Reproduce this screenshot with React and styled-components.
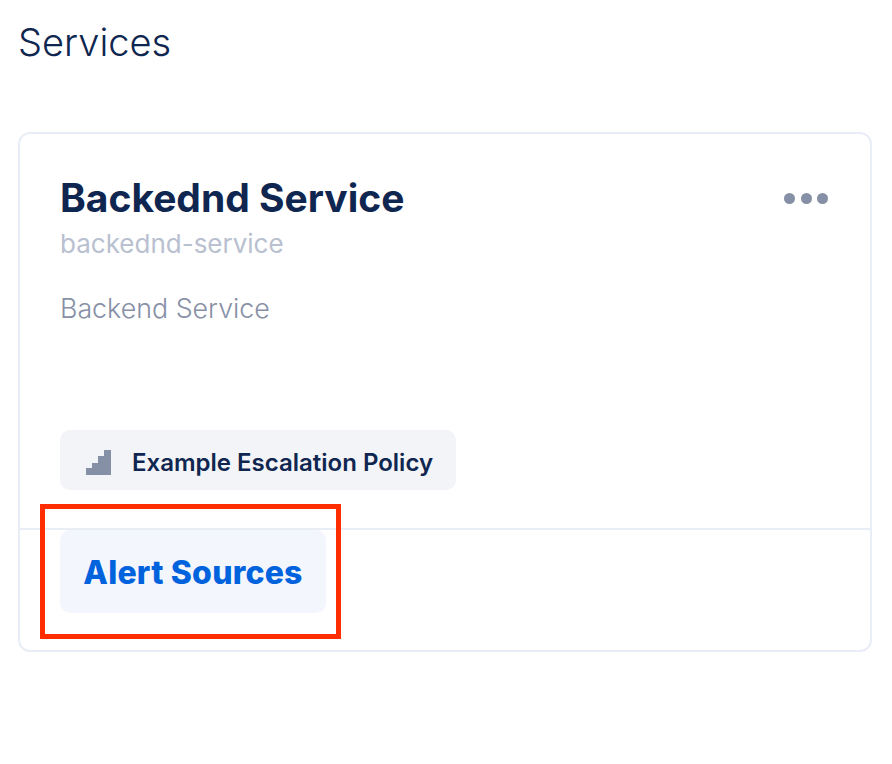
import React from 'react';
import styled, { createGlobalStyle } from 'styled-components';

const GlobalStyle = createGlobalStyle`
  html, body {
    margin: 0;
    padding: 0;
    background: #fff;
    font-family: Inter, "Liberation Sans", sans-serif;
  }
`;

const Page = styled.div`
  width: 892px;
  height: 764px;
  padding: 20px 20px 0 18px;
  box-sizing: border-box;
  overflow: hidden;
`;

const Heading = styled.h1`
  margin: 0 0 67px;
  font-size: 38px;
  line-height: 45px;
  font-weight: 300;
  color: #0f2650;
`;

const Card = styled.div`
  position: relative;
  box-sizing: border-box;
  height: 520px;
  border: 2px solid #e9edf6;
  border-radius: 12px;
  display: flex;
  flex-direction: column;
`;

const Top = styled.div`
  height: 396px;
  box-sizing: border-box;
  padding: 40px 40px 0;
  border-bottom: 2px solid #e9edf6;
  display: flex;
  flex-direction: column;
`;

const TitleRow = styled.div`
  display: flex;
  justify-content: space-between;
  align-items: flex-start;
`;

const Title = styled.h2`
  margin: 0;
  font-size: 39px;
  line-height: 48px;
  font-weight: 700;
  color: #0f2650;
`;

const Dots = styled.div`
  display: flex;
  gap: 5.5px;
  margin: 19px 2px 0 0;
`;

const Dot = styled.span`
  width: 11px;
  height: 11px;
  border-radius: 50%;
  background: #858fa5;
`;

const Slug = styled.div`
  font-size: 26px;
  line-height: 30px;
  color: #b9c0d0;
  margin-top: 7px;
`;

const Description = styled.div`
  font-size: 26.8px;
  line-height: 34px;
  font-weight: 300;
  color: #8790a6;
  margin-top: 32px;
`;

const Policy = styled.div`
  margin-top: auto;
  margin-bottom: 38px;
  align-self: flex-start;
  height: 60px;
  box-sizing: border-box;
  padding: 4px 23px 0 26px;
  display: flex;
  align-items: center;
  gap: 21px;
  border-radius: 10px;
  background: #f3f4f7;
  font-size: 24px;
  font-weight: 600;
  color: #0f2650;
`;

const Bottom = styled.div`
  padding: 0 40px;
`;

const AlertButton = styled.button`
  width: 266px;
  height: 83px;
  border: 0;
  padding: 2px 0 0;
  border-radius: 10px;
  background: #f3f6fc;
  color: #0063dd;
  font-family: Inter, Roboto, sans-serif;
  font-size: 32px;
  font-weight: 800;
  letter-spacing: 0.2px;
  cursor: pointer;
`;

const Highlight = styled.div`
  position: absolute;
  left: 20px;
  top: 370px;
  width: 301px;
  height: 135px;
  box-sizing: border-box;
  border: 5px solid #ff2d00;
  pointer-events: none;
`;

const StairsIcon = () => (
  <svg width="25" height="25" viewBox="0 0 25 25" fill="#858fa5">
    <path d="M0 25V18H6V13H12V6H18V0H25V25Z" />
  </svg>
);

const App = () => {
  return (
    <React.Fragment>
      <GlobalStyle />
      <Page>
        <Heading>Services</Heading>
        <Card>
          <Top>
            <TitleRow>
              <Title>Backednd Service</Title>
              <Dots>
                <Dot />
                <Dot />
                <Dot />
              </Dots>
            </TitleRow>
            <Slug>backednd-service</Slug>
            <Description>Backend Service</Description>
            <Policy>
              <StairsIcon />
              Example Escalation Policy
            </Policy>
          </Top>
          <Bottom>
            <AlertButton>Alert Sources</AlertButton>
          </Bottom>
          <Highlight />
        </Card>
      </Page>
    </React.Fragment>
  );
};

export default App;
